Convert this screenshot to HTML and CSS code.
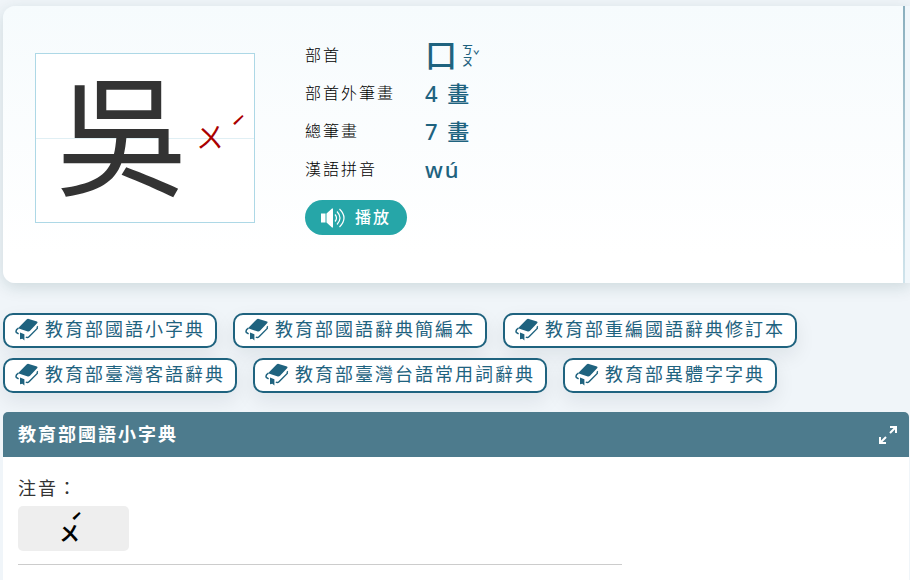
FILE: index.html
```html
<!DOCTYPE html>
<html lang="zh-Hant">

<head>
    <meta charset="UTF-8">
    <meta name="viewport" content="width=device-width, initial-scale=1.0">
    <title>吳</title>
    <link rel="stylesheet" href="styles.css">
</head>

<body>
    <svg width="0" height="0" class="symbols" aria-hidden="true">
        <symbol id="book" viewBox="0 0 24 24">
            <path d="M11.6 1.4Q12.6.6 13.8 1L22 3.6Q23 4.1 22.3 5.1L15 12.8Q14 13.8 12.8 13.5L3 10.3z" fill="currentColor" />
            <path d="M3.4 10.2Q.2 12.2 1.3 14.4L3.6 15.8" fill="none" stroke="currentColor" stroke-width="1.5" />
            <path d="M22.8 8.2Q21.8 9 22.3 10.4L14 18.8Q12.8 20 10.8 19.2" fill="none" stroke="currentColor" stroke-width="1.4" />
            <path d="M5 14.6L9.4 16.2V22.4l-2-1.6-2.4.4z" fill="currentColor" />
        </symbol>
    </svg>
    <div class="page">
        <div class="top">
            <div class="card">
                <div class="word">
                    <span class="big">吳</span>
                    <span class="zhuyin red"><span>ㄨ</span><i>ˊ</i></span>
                </div>
                <div class="info">
                    <dl>
                        <dt>部首</dt>
                        <dd><span class="radical">口</span><span class="small-zhuyin"><span>ㄎ<br>ㄡ</span><i>ˇ</i></span></dd>
                        <dt>部首外筆畫</dt>
                        <dd>4 畫</dd>
                        <dt>總筆畫</dt>
                        <dd>7 畫</dd>
                        <dt>漢語拼音</dt>
                        <dd>wú</dd>
                    </dl>
                    <button class="play" type="button">
                        <svg width="26" height="20" viewBox="0 0 26 20" aria-hidden="true">
                            <path d="M1 5.5h4.5v9H1zM6.5 5.5l5.5-5h1v19h-1l-5.5-5z" fill="#fff" />
                            <path d="M15 6.5q3 3.5 0 7M17 3.5q6 6.5 0 13M19.5 1q9 9 0 18" fill="none" stroke="#fff" stroke-width="1.2" />
                        </svg>
                        <span>播放</span>
                    </button>
                </div>
            </div>
            <div class="side"></div>
        </div>
        <nav class="links">
            <a href="#dict"><svg><use href="#book" /></svg>教育部國語小字典</a>
            <a href="#dict"><svg><use href="#book" /></svg>教育部國語辭典簡編本</a>
            <a href="#dict"><svg><use href="#book" /></svg>教育部重編國語辭典修訂本</a>
            <a href="#dict"><svg><use href="#book" /></svg>教育部臺灣客語辭典</a>
            <a href="#dict"><svg><use href="#book" /></svg>教育部臺灣台語常用詞辭典</a>
            <a href="#dict"><svg><use href="#book" /></svg>教育部異體字字典</a>
        </nav>
        <section class="panel" id="dict">
            <div class="panel-head">
                <h2>教育部國語小字典</h2>
                <button class="expand" type="button" aria-label="展開">
                    <svg width="20" height="20" viewBox="0 0 20 20" aria-hidden="true">
                        <path d="M12 2H18v6M18 2l-6 6M8 18H2v-6M2 18l6-6" fill="none" stroke="#fff" stroke-width="2" />
                    </svg>
                </button>
            </div>
            <div class="panel-body">
                <p>注音：</p>
                <div class="sound"><span class="zhuyin above"><i>ˊ</i><span>ㄨ</span></span></div>
                <hr>
            </div>
        </section>
    </div>
</body>

</html>
```
FILE: styles.css
```css
* {
    margin: 0;
    padding: 0;
    box-sizing: border-box;
}

body {
    background-color: #f0f5f9;
    font-family: "Noto Sans", "Noto Sans CJK TC", sans-serif;
    font-size: 18px;
    letter-spacing: 2px;
    color: #333;
}

button {
    font-family: inherit;
    letter-spacing: inherit;
    border: none;
    cursor: pointer;
}

i {
    font-style: normal;
}

.symbols {
    position: absolute;
}

.page {
    display: flex;
    flex-direction: column;
    min-height: 100vh;
    padding: 6px 0 0 3px;
    overflow: hidden;
}

/* 字頭區 */
.top {
    display: flex;
    border-radius: 12px 0 0 12px;
    box-shadow: 0 4px 16px rgba(0, 60, 60, .15);
}

.card {
    flex: 1;
    display: flex;
    align-items: flex-start;
    gap: 50px;
    padding: 30px 32px 48px;
    border-radius: 12px 0 0 12px;
    background: linear-gradient(#f6fbfd, #fff 90%);
}

.side {
    width: 7px;
    background: linear-gradient(#8aafbe, #d0e4ec) left / 2px 100% no-repeat #f1f7fb;
}

.word {
    display: flex;
    align-items: flex-start;
    width: 220px;
    height: 170px;
    margin-top: 17px;
    padding-left: 20px;
    border: 1px solid #add8e6;
    background: linear-gradient(#e0eff4, #e0eff4) center / 100% 1px no-repeat #fff;
    letter-spacing: 0;
}

.big {
    font-size: 132px;
    line-height: 160px;
}

.zhuyin {
    display: flex;
    font-family: "Noto Sans CJK TC", sans-serif;
    letter-spacing: 0;
}

.red {
    flex: 1;
    justify-content: space-between;
    padding: 66px 8px 0 8px;
    font-size: 28px;
    line-height: 32px;
    color: #a00;
}

.red i {
    width: 16px;
    line-height: 16px;
}

dl {
    display: grid;
    grid-template-columns: 120px auto;
    grid-auto-rows: 38px;
    align-items: center;
}

dt {
    font-size: 16px;
    line-height: 36px;
    font-weight: 300;
    color: #000;
}

dd {
    display: flex;
    align-items: center;
    font-size: 22px;
    line-height: 36px;
    font-weight: 500;
    color: #1f637f;
}

.radical {
    font-size: 32px;
    line-height: 36px;
}

.small-zhuyin {
    display: flex;
    align-items: center;
    padding-left: 3px;
    font-family: "Noto Sans CJK TC", sans-serif;
    font-size: 11px;
    line-height: 12px;
    letter-spacing: 0;
}

.play {
    display: flex;
    align-items: center;
    gap: 9px;
    height: 35px;
    margin-top: 12px;
    padding: 0 16px 0 15px;
    border-radius: 18px;
    background-color: #26a6a8;
    color: #fff;
    font-size: 16px;
    font-weight: 500;
}

.play span {
    padding-bottom: 3px;
}

/* 辭典連結 */
.links {
    display: flex;
    flex-wrap: wrap;
    gap: 10px 16px;
    padding: 30px 0 19px;
}

.links a {
    display: flex;
    gap: 6px;
    height: 35px;
    padding: 0 10px;
    border: 2px solid #1f637f;
    border-radius: 10px;
    background-color: #fff;
    box-shadow: 0 8px 20px rgba(0, 20, 40, .08);
    color: #1f637f;
    line-height: 28px;
    text-decoration: none;
}

.links svg {
    width: 24px;
    height: 24px;
    margin-top: 3px;
}

.panel {
    flex: 1;
    margin-right: 1px;
    border-radius: 5px 5px 0 0;
    background-color: #fff;
}

.panel-head {
    display: flex;
    align-items: center;
    justify-content: space-between;
    height: 45px;
    padding: 0 11px 0 15px;
    border-radius: 5px 5px 0 0;
    background-color: #4d7b8d;
    color: #fff;
}

.panel-head h2 {
    font-size: 18px;
    line-height: 27px;
}

.expand {
    display: flex;
    background: none;
}

.panel-body {
    padding: 18px 15px 15px;
}

.panel-body p {
    line-height: 27px;
}

.sound {
    display: flex;
    justify-content: center;
    width: 111px;
    height: 45px;
    margin-top: 4px;
    padding-top: 6px;
    border-radius: 5px;
    background-color: #eee;
    color: #000;
}

.above {
    flex-direction: column;
    align-items: center;
    font-size: 20px;
    font-weight: 700;
    line-height: 20px;
}

.above i {
    height: 11px;
    padding-left: 6px;
}

.above span {
    margin-right: 8px;
}

hr {
    width: 69%;
    margin-top: 13px;
    border: none;
    border-top: 1px solid #ccc;
}
```
